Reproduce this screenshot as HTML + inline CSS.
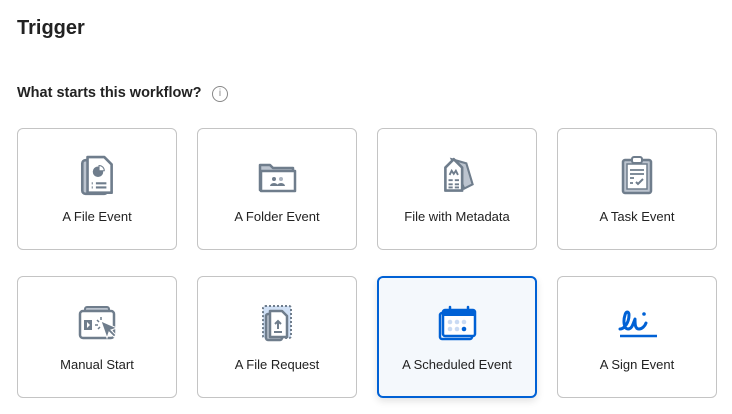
<!DOCTYPE html>
<html><head><meta charset="utf-8"><style>
body{margin:0;width:732px;height:414px;background:#fff;font-family:"Liberation Sans",sans-serif;color:#222;position:relative;overflow:hidden}
h1{position:absolute;left:17px;top:17px;margin:0;font-size:20px;font-weight:bold;color:#222}
.q{position:absolute;left:17px;top:85px;font-size:14.5px;font-weight:bold;color:#222}
.info{position:absolute;left:212px;top:86px;width:16px;height:16px;border:1.3px solid #888;border-radius:50%;box-sizing:border-box;font-size:10px;color:#888;text-align:center;line-height:14px}
.c{position:absolute;width:160px;height:122px;border:1px solid #c4c4c4;border-radius:6px;box-sizing:border-box;background:#fff}
.c.sel{border:2px solid #0061d5;background:#f4f8fc;box-shadow:0 3px 8px rgba(0,0,0,.12)}
.c svg{position:absolute;left:59px;top:26px}
.c span{position:absolute;left:0;right:0;top:80px;text-align:center;font-size:13px;color:#222}
.c.sel svg{left:58px;top:25px}.c.sel span{top:79px}
</style></head><body>
<h1>Trigger</h1>
<div class="q">What starts this workflow?</div>
<div class="info">i</div>

<div class="c" style="left:17px;top:128px"><svg width="42" height="44" viewBox="0 0 40 42">
<rect x="5" y="5" width="24" height="32" rx="3" fill="#bcc4cf" stroke="#6f7d8c" stroke-width="2.5"/>
<path d="M10 2h16l7 7v27H10z" fill="#fff" stroke="#6f7d8c" stroke-width="2.5" stroke-linejoin="round"/>
<circle cx="20" cy="16" r="5" fill="#6f7d8c"/><path d="M21 10a5 5 0 0 1 5 5h-5z" fill="#fff" stroke="#6f7d8c"/>
<path d="M14 27h1M18 27h10M14 31h1M18 31h10" stroke="#6f7d8c" stroke-width="2"/></svg><span>A File Event</span></div>

<div class="c" style="left:197px;top:128px"><svg width="42" height="42" viewBox="0 0 42 42">
<path d="M3 10h10l3 3h20v22H3z" fill="#bcc4cf" stroke="#6f7d8c" stroke-width="2.5" stroke-linejoin="round"/>
<path d="M4 16h34v20H4z" fill="#fff" stroke="#6f7d8c" stroke-width="2.5" stroke-linejoin="round"/>
<circle cx="17" cy="24" r="2" fill="#6f7d8c"/><circle cx="24" cy="24" r="2" fill="#aab3bf"/>
<path d="M13 31a4 3 0 0 1 8 0zM20 31a4 3 0 0 1 8 0z" fill="#6f7d8c"/></svg><span>A Folder Event</span></div>

<div class="c" style="left:377px;top:128px"><svg width="44" height="44" viewBox="0 0 42 42">
<path d="M14 4l14 4 6 20-8 4z" fill="#bcc4cf" stroke="#6f7d8c" stroke-width="2"/>
<path d="M8 12l8-8 8 8v22H8z" fill="#fff" stroke="#6f7d8c" stroke-width="2.5" stroke-linejoin="round"/>
<path d="M12 19l2-4 2 3 2-3 2 4" fill="none" stroke="#6f7d8c" stroke-width="1.8"/>
<path d="M11 24h4M17 24h4M11 28h4M17 28h4M11 31h4M17 31h4" stroke="#6f7d8c" stroke-width="1.8"/></svg><span>File with Metadata</span></div>

<div class="c" style="left:557px;top:128px"><svg width="42" height="42" viewBox="0 0 42 42">
<rect x="6" y="5" width="28" height="33" rx="2" fill="#bcc4cf" stroke="#6f7d8c" stroke-width="2.5"/>
<rect x="10" y="9" width="20" height="25" fill="#fff" stroke="#6f7d8c" stroke-width="1.5"/>
<rect x="15" y="2" width="10" height="6" rx="2" fill="#fff" stroke="#6f7d8c" stroke-width="2"/>
<path d="M13 15h14M13 19h14M13 23h4M13 28h3" stroke="#6f7d8c" stroke-width="1.8"/><path d="M19 27l2 2 5-5" fill="none" stroke="#6f7d8c" stroke-width="2"/></svg><span>A Task Event</span></div>

<div class="c" style="left:17px;top:276px"><svg width="44" height="42" viewBox="0 0 44 42">
<rect x="8" y="4" width="24" height="6" rx="2" fill="#bcc4cf" stroke="#6f7d8c" stroke-width="2"/>
<rect x="3" y="8" width="34" height="27" rx="3" fill="#fff" stroke="#6f7d8c" stroke-width="2.5"/>
<rect x="7" y="17" width="8" height="10" fill="#6f7d8c"/><path d="M10 19l3 3-3 3z" fill="#fff"/>
<path d="M24 18l16 7-6 2 5 5-2 2-5-5-2 6z" fill="#6f7d8c" stroke="#fff" stroke-width="1"/>
<path d="M20 17l2 2M18 22h3M21 26l2-2M24 14v3" stroke="#6f7d8c" stroke-width="1.5"/></svg><span>Manual Start</span></div>

<div class="c" style="left:197px;top:276px"><svg width="42" height="42" viewBox="0 0 42 42">
<rect x="6" y="3" width="28" height="32" rx="2" fill="#d0e0f5" stroke="#6f7d8c" stroke-width="2" stroke-dasharray="2 2"/>
<rect x="9" y="11" width="16" height="26" rx="2" fill="#bcc4cf" stroke="#6f7d8c" stroke-width="2.5"/>
<path d="M13 8h12l5 5v21H13z" fill="#fff" stroke="#6f7d8c" stroke-width="2.5" stroke-linejoin="round"/>
<path d="M21 26v-8M18 21l3-3 3 3M17 29h8" fill="none" stroke="#6f7d8c" stroke-width="2"/></svg><span>A File Request</span></div>

<div class="c sel" style="left:377px;top:276px"><svg width="42" height="42" viewBox="0 0 42 42">
<rect x="3" y="10" width="32" height="26" rx="2" fill="#fff" stroke="#0061d5" stroke-width="2.5"/>
<rect x="6" y="7" width="32" height="26" rx="2" fill="#fff" stroke="#0061d5" stroke-width="2.5"/>
<rect x="6" y="7" width="32" height="6" fill="#0061d5"/>
<path d="M13 4v6M31 4v6" stroke="#0061d5" stroke-width="2.5" stroke-linecap="round"/>
<g fill="#c9daf3"><circle cx="13" cy="19" r="2.3"/><circle cx="20" cy="19" r="2.3"/><circle cx="27" cy="19" r="2.3"/><circle cx="13" cy="26" r="2.3"/><circle cx="20" cy="26" r="2.3"/></g>
<circle cx="27" cy="26" r="2.3" fill="#0061d5"/></svg><span>A Scheduled Event</span></div>

<div class="c" style="left:557px;top:276px"><svg width="42" height="42" viewBox="0 0 42 42">
<path d="M3 26c4 0 9-6 9-14 0-4-3-4-4 0-2 6-1 14 3 14s5-5 7-10c0 5 0 10 4 10 3 0 6-3 7-6" fill="none" stroke="#0061d5" stroke-width="3" stroke-linecap="round" stroke-linejoin="round"/>
<circle cx="27" cy="11" r="1.8" fill="#0061d5"/>
<path d="M3 33h37" stroke="#0061d5" stroke-width="2.5"/></svg><span>A Sign Event</span></div>
</body></html>
